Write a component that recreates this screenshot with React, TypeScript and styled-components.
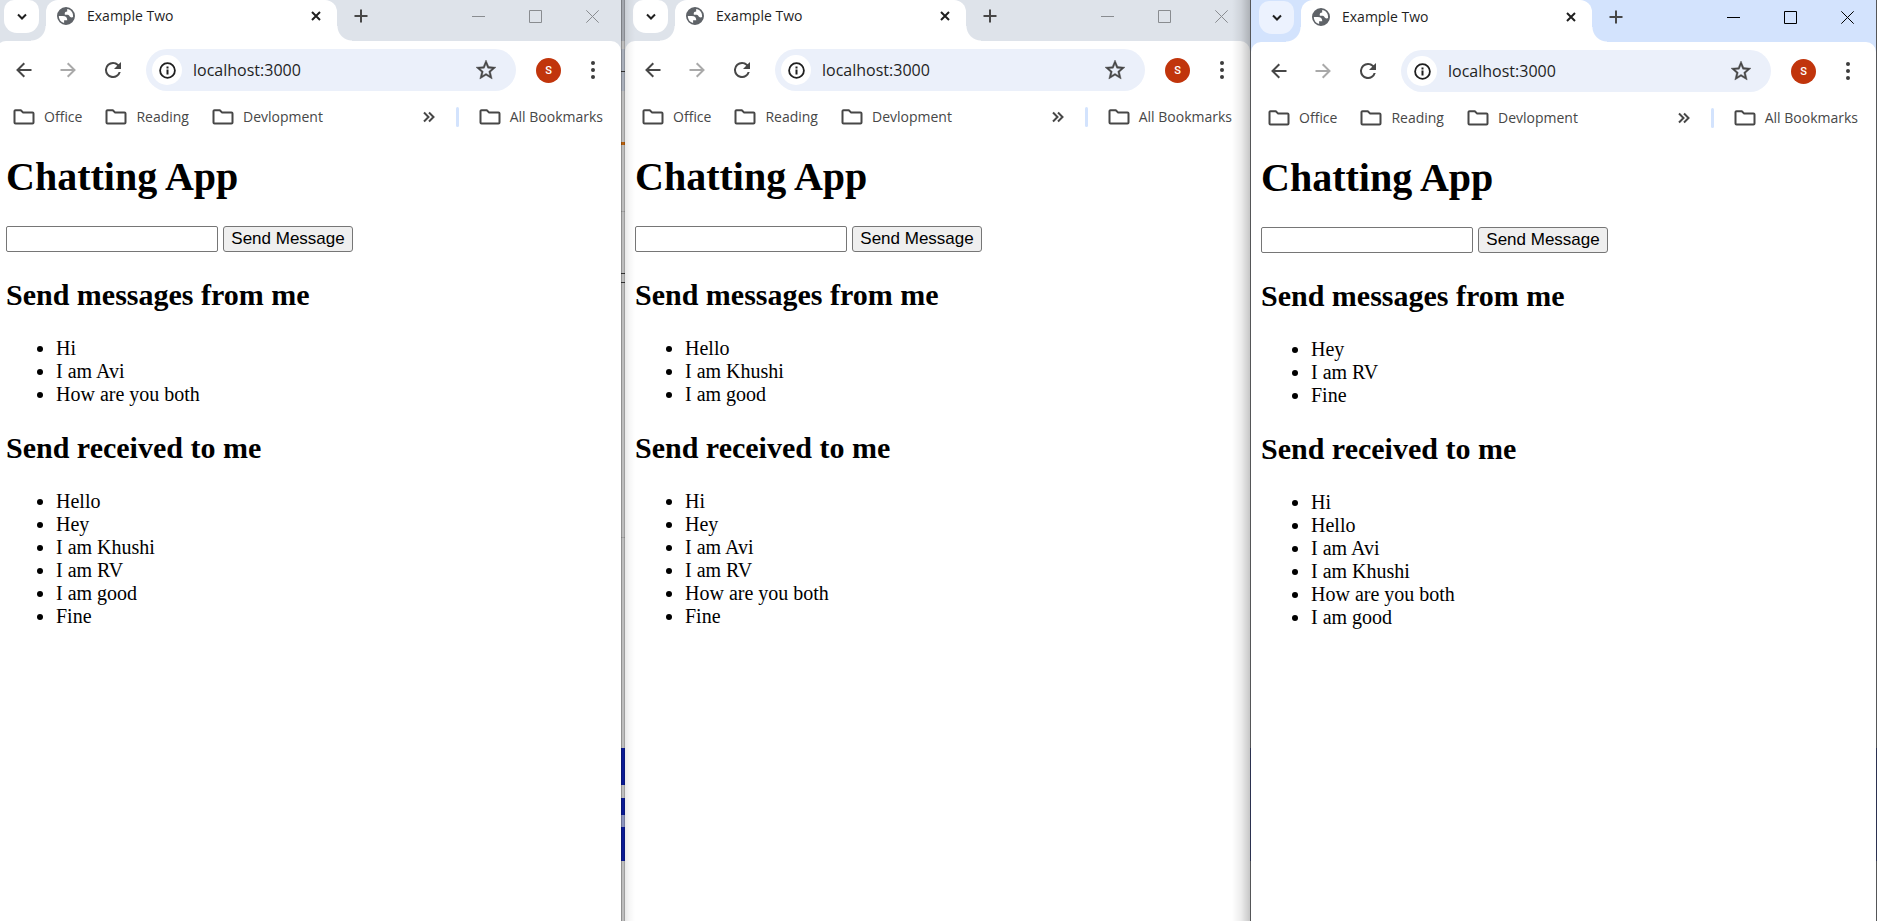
import React from "react";
import styled, { createGlobalStyle, css } from "styled-components";

const GlobalStyle = createGlobalStyle`
  *, *::before, *::after { box-sizing: border-box; }
  html, body { margin: 0; background: #bdbdbd; }
  body { overflow: hidden; }
  button { font: inherit; color: inherit; }
`;

const uiFont = css`
  font-family: "Open Sans", "Noto Sans", sans-serif;
`;

/* The first window hangs 4px over the left edge of the screen. */
const Desktop = styled.main`
  display: grid;
  grid-template-columns: minmax(0, 1fr) 4px minmax(0, 1fr) 1px minmax(0, 1fr) 1px;
  min-height: 100vh;
  margin-left: -4px;
`;

const Gap = styled.div`
  background:
    linear-gradient(90deg, rgba(0, 0, 0, 0.24) 1px, transparent 1px 3px, rgba(0, 0, 0, 0.16) 3px),
    linear-gradient(
      #a3a7ae 0 41px,
      #bdbdbd 41px 49px,
      #a9afba 49px 71px,
      #333 71px 72px,
      #a9afba 72px 91px,
      #bdbdbd 91px 142px,
      #b8600e 142px 145px,
      #bdbdbd 145px 211px,
      #a3a3a3 211px 212px,
      #bdbdbd 212px 273px,
      #333 273px 274px,
      #bdbdbd 274px 282px,
      #333 282px 283px,
      #bdbdbd 283px 537px,
      #a3a3a3 537px 538px,
      #bdbdbd 538px 748px,
      #0a1a94 748px 785px,
      #bdbdbd 785px 798px,
      #0a1a94 798px 815px,
      #8b93bd 815px 827px,
      #0a1a94 827px 861px,
      #bdbdbd 861px
    );
`;

const Edge = styled.div`
  background: linear-gradient(#555658 0 748px, #2b3150 748px 861px, #555658 861px);
`;

const Frame = styled.section<{ $active: boolean }>`
  position: relative;
  display: flex;
  flex-direction: column;
  min-width: 0;
  padding-top: ${(p) => (p.$active ? 1 : 0)}px;
  background: ${(p) => (p.$active ? "#d3e3fd" : "#dee3ea")};
`;

const Shade = styled.div<{ $side: "left" | "right" }>`
  position: absolute;
  top: 0;
  bottom: 0;
  ${(p) => p.$side}: 0;
  width: ${(p) => (p.$side === "left" ? 10 : 18)}px;
  pointer-events: none;
  background: ${(p) =>
    p.$side === "left"
      ? "linear-gradient(90deg, rgba(0,0,0,0.09), rgba(0,0,0,0.03) 50%, transparent)"
      : "linear-gradient(270deg, rgba(0,0,0,0.22), rgba(0,0,0,0.07) 50%, transparent)"};
`;

const TabStrip = styled.header`
  ${uiFont}
  display: flex;
  align-items: flex-end;
  height: 41px;
  padding-left: 8px;
`;

const TabSearch = styled.button<{ $active: boolean }>`
  display: grid;
  place-items: center;
  align-self: flex-start;
  width: 35px;
  height: 33px;
  padding: 0;
  border: 0;
  border-radius: 10px 10px 13px 13px;
  background: ${(p) => (p.$active ? "#ecf2fe" : "#fff")};
  color: #1f1f1f;
`;

const Tab = styled.div<{ $active: boolean }>`
  position: relative;
  display: flex;
  align-items: center;
  width: 291px;
  height: ${(p) => (p.$active ? 42 : 41)}px;
  margin-left: 7px;
  padding: ${(p) => (p.$active ? 1 : 0)}px 13px 9px 11px;
  border-radius: 12px 12px 0 0;
  background: #fff;
  color: #1f1f1f;
  font-size: 14px;
  line-height: 20px;

  &::before,
  &::after {
    content: "";
    position: absolute;
    bottom: 0;
    width: 15px;
    height: 15px;
  }
  &::before {
    right: 100%;
    background: radial-gradient(circle at 0 0, transparent 14px, #fff 15px);
  }
  &::after {
    left: 100%;
    background: radial-gradient(circle at 100% 0, transparent 14px, #fff 15px);
  }
`;

const TabTitle = styled.span`
  flex: 1;
  margin-left: 12px;
`;

const IconButton = styled.button<{ $size: number; $tone?: string }>`
  display: grid;
  place-items: center;
  flex: none;
  width: ${(p) => p.$size}px;
  height: ${(p) => p.$size}px;
  padding: 0;
  border: 0;
  background: none;
  color: ${(p) => p.$tone ?? "#474747"};
`;

const NewTab = styled(IconButton)`
  align-self: flex-start;
  margin-left: 8px;
`;

const WindowControls = styled.div<{ $active: boolean }>`
  display: flex;
  align-self: flex-start;
  height: 33px;
  margin-left: auto;
  color: ${(p) => (p.$active ? "#000" : "#898c90")};
`;

const WindowControl = styled.button`
  display: grid;
  place-items: center;
  width: 57px;
  height: 33px;
  padding: 0;
  border: 0;
  background: none;
`;

const Sheet = styled.div`
  flex: 1;
  border-radius: 10px 10px 0 0;
  background: #fff;
`;

const Toolbar = styled.div`
  ${uiFont}
  display: flex;
  align-items: center;
  height: 58px;
  padding: 0 12px 0 6px;
`;

const NavButtons = styled.div`
  display: flex;
  width: 144px;
`;

const AddressBar = styled.label`
  display: flex;
  flex: 1;
  align-items: center;
  min-width: 0;
  height: 42px;
  padding: 0 8px 0 6px;
  border-radius: 21px;
  background: #ebf0fa;
`;

const SiteInfo = styled(IconButton)`
  border-radius: 50%;
  background: #fff;
`;

const AddressInput = styled.input`
  ${uiFont}
  flex: 1;
  min-width: 0;
  height: 30px;
  margin-left: 11px;
  padding: 0;
  border: 0;
  outline: 0;
  background: transparent;
  color: #1f1f1f;
  font-size: 16px;
`;

const Avatar = styled.button`
  display: grid;
  place-items: center;
  width: 25px;
  height: 25px;
  margin: 0 16px 0 20px;
  padding: 0;
  border: 0;
  border-radius: 50%;
  background: #c1350c;
  color: #fff;
  font: 500 11px/25px Roboto, sans-serif;
`;

const BookmarksBar = styled.nav`
  ${uiFont}
  display: flex;
  align-items: center;
  height: 36px;
  padding: 0 18px 0 17px;
  color: #474747;
  font-size: 14px;
  line-height: 20px;
`;

const Bookmark = styled.a`
  display: flex;
  align-items: center;
  gap: 9px;
  margin-right: 23px;
  color: inherit;
  font-size: 14px;
  text-decoration: none;
  white-space: nowrap;

  &:last-child { margin-right: 0; }
`;

const Overflow = styled(IconButton)`
  margin-left: auto;
`;

const Divider = styled.span`
  width: 3px;
  height: 20px;
  margin: 0 20px 0 17px;
  border-radius: 2px;
  background: #d3e3fd;
`;

const Page = styled.article`
  padding: 19px 10px 0;
  color: #000;
  font-family: "Liberation Serif", "Times New Roman", serif;
  font-size: 20px;
  line-height: 23px;
`;

const Title = styled.h1`
  margin: 0 0 26px;
  font-size: 40px;
  line-height: 46px;
`;

const Form = styled.form`
  display: flex;
  gap: 5px;
  margin-bottom: 26px;
`;

const MessageInput = styled.input`
  width: 212px;
  height: 26px;
  padding: 1px 3px;
  border: 1px solid #767676;
  border-radius: 2px;
  background: #fff;
  font: 17px "Liberation Sans", Arial, sans-serif;
`;

const SendButton = styled.button`
  width: 130px;
  height: 26px;
  padding: 0;
  border: 1px solid #767676;
  border-radius: 3px;
  background: #efefef;
  color: #000;
  font: 17px/24px "Liberation Sans", Arial, sans-serif;
  white-space: nowrap;
`;

const Heading = styled.h2`
  margin: 25px 0;
  font-size: 30px;
  line-height: 34px;
`;

const Messages = styled.ul`
  margin: 0;
  padding-left: 50px;
`;

const Folder = () => (
  <svg width="22" height="16" viewBox="0 0 22 16" fill="none" stroke="currentColor" strokeWidth="2" strokeLinejoin="round" aria-hidden="true">
    <path d="M2.5 1.2h5.3l2.4 2.4h9.3a1 1 0 0 1 1 1v9a1 1 0 0 1-1 1h-17a1 1 0 0 1-1-1V2.2a1 1 0 0 1 1-1z" />
  </svg>
);

const Globe = () => (
  <svg width="18" height="18" viewBox="2 2 20 20" fill="#5f6368" aria-hidden="true">
    <path d="M12 2a10 10 0 1 0 0 20 10 10 0 0 0 0-20zM4 12h4.4c3.4 0 5 1.7 5 4.6H9.9v3.1A8 8 0 0 1 4 12zm15.9 1.2c-1.2.6-2.5.5-3.5-.4-.9-1-.9-2.2-2.7-2.2h-3c-.5-2.4.5-3.5 2.6-3.6V4.4l.7-.1a8 8 0 0 1 5.9 8.9z" />
  </svg>
);

const Stroke = ({ size, box, d, width }: { size: number; box: number; d: string; width: number }) => (
  <svg width={size} height={size} viewBox={`0 0 ${box} ${box}`} fill="none" stroke="currentColor" strokeWidth={width} aria-hidden="true">
    <path d={d} />
  </svg>
);

const Reload = () => (
  <svg width="18" height="16" viewBox="2 4 18 16" fill="currentColor" aria-hidden="true">
    <path d="M17.65 6.35A7.96 7.96 0 0 0 12 4a8 8 0 1 0 7.73 10h-2.08A6 6 0 1 1 12 6c1.66 0 3.14.69 4.22 1.78L13 11h7V4l-2.35 2.35z" />
  </svg>
);

const Info = () => (
  <svg width="17" height="17" viewBox="0 0 17 17" fill="none" stroke="#1f1f1f" strokeWidth="2" aria-hidden="true">
    <circle cx="8.5" cy="8.5" r="7.4" strokeWidth="1.8" />
    <path d="M8.5 7.5v5M8.5 4.5v2" />
  </svg>
);

const Star = () => (
  <svg width="20" height="20" viewBox="2 2 20 20" fill="currentColor" stroke="currentColor" strokeWidth="0.4" aria-hidden="true">
    <path d="M22 9.24l-7.19-.62L12 2 9.19 8.63 2 9.24l5.46 4.73L5.82 21 12 17.27 18.18 21l-1.63-7.03L22 9.24zM12 15.4l-3.76 2.27 1-4.28-3.32-2.88 4.38-.38L12 6.1l1.71 4.04 4.38.38-3.32 2.88 1 4.28L12 15.4z" />
  </svg>
);

const Dots = () => (
  <svg width="4" height="18" viewBox="0 0 4 18" fill="currentColor" aria-hidden="true">
    <circle cx="2" cy="2" r="2" />
    <circle cx="2" cy="9" r="2" />
    <circle cx="2" cy="16" r="2" />
  </svg>
);

const Square = () => (
  <svg width="13" height="13" viewBox="0 0 13 13" fill="none" stroke="currentColor" aria-hidden="true">
    <path d="M.5.5h12v12H.5z" />
  </svg>
);

const bookmarks = ["Office", "Reading", "Devlopment"];

interface ChatWindowProps {
  sent: string[];
  received: string[];
  active?: boolean;
  children?: React.ReactNode;
}

const ChatWindow = ({ sent, received, active = false, children }: ChatWindowProps) => (
  <Frame $active={active}>
    <TabStrip>
      <TabSearch $active={active} aria-label="Search tabs">
        <Stroke size={10} box={10} d="M1 2.5l4 4 4-4" width={2} />
      </TabSearch>
      <Tab $active={active}>
        <Globe />
        <TabTitle>Example Two</TabTitle>
        <IconButton $size={16} $tone="#1f1f1f" aria-label="Close tab">
          <Stroke size={10} box={10} d="M1 1l8 8M9 1l-8 8" width={2} />
        </IconButton>
      </Tab>
      <NewTab $size={32} aria-label="New tab">
        <Stroke size={14} box={14} d="M7 .5v13M.5 7h13" width={2} />
      </NewTab>
      <WindowControls $active={active}>
        <WindowControl aria-label="Minimize">
          <Stroke size={13} box={13} d="M0 6.5h13" width={1} />
        </WindowControl>
        <WindowControl aria-label="Maximize">
          <Square />
        </WindowControl>
        <WindowControl aria-label="Close">
          <Stroke size={13} box={13} d="M.3.3l12.4 12.4M12.7.3L.3 12.7" width={1} />
        </WindowControl>
      </WindowControls>
    </TabStrip>
    <Sheet>
      <Toolbar>
        <NavButtons>
          <IconButton $size={44} aria-label="Back">
            <Stroke size={16} box={16} d="M15.5 8H2M8.3 1.2L1.5 8l6.8 6.8" width={2} />
          </IconButton>
          <IconButton $size={44} $tone="#a9a9a9" aria-label="Forward">
            <Stroke size={16} box={16} d="M.5 8H14M7.7 1.2L14.5 8l-6.8 6.8" width={2} />
          </IconButton>
          <IconButton $size={44} aria-label="Reload">
            <Reload />
          </IconButton>
        </NavButtons>
        <AddressBar>
          <SiteInfo $size={30} type="button" aria-label="Site information">
            <Info />
          </SiteInfo>
          <AddressInput aria-label="Address" defaultValue="localhost:3000" />
          <IconButton $size={44} type="button" aria-label="Bookmark this tab">
            <Star />
          </IconButton>
        </AddressBar>
        <Avatar aria-label="Profile">S</Avatar>
        <IconButton $size={32} $tone="#3c3c3c" aria-label="Menu">
          <Dots />
        </IconButton>
      </Toolbar>
      <BookmarksBar>
        {bookmarks.map((name) => (
          <Bookmark href="#" key={name}>
            <Folder />
            {name}
          </Bookmark>
        ))}
        <Overflow $size={20} aria-label="More bookmarks">
          <Stroke size={12} box={12} d="M1 1.5L5.5 6 1 10.5M6 1.5L10.5 6 6 10.5" width={2} />
        </Overflow>
        <Divider />
        <Bookmark href="#">
          <Folder />
          All Bookmarks
        </Bookmark>
      </BookmarksBar>
      <Page>
        <Title>Chatting App</Title>
        <Form onSubmit={(event) => event.preventDefault()}>
          <MessageInput type="text" aria-label="Message" />
          <SendButton type="submit">Send Message</SendButton>
        </Form>
        <Heading>Send messages from me</Heading>
        <Messages>
          {sent.map((text) => (
            <li key={text}>{text}</li>
          ))}
        </Messages>
        <Heading>Send received to me</Heading>
        <Messages>
          {received.map((text) => (
            <li key={text}>{text}</li>
          ))}
        </Messages>
      </Page>
    </Sheet>
    {children}
  </Frame>
);

export default function App() {
  return (
    <>
      <GlobalStyle />
      <Desktop>
        <ChatWindow
          sent={["Hi", "I am Avi", "How are you both"]}
          received={["Hello", "Hey", "I am Khushi", "I am RV", "I am good", "Fine"]}
        />
        <Gap />
        <ChatWindow
          sent={["Hello", "I am Khushi", "I am good"]}
          received={["Hi", "Hey", "I am Avi", "I am RV", "How are you both", "Fine"]}
        >
          <Shade $side="left" />
          <Shade $side="right" />
        </ChatWindow>
        <Edge />
        <ChatWindow
          active
          sent={["Hey", "I am RV", "Fine"]}
          received={["Hi", "Hello", "I am Avi", "I am Khushi", "How are you both", "I am good"]}
        />
        <Edge />
      </Desktop>
    </>
  );
}
